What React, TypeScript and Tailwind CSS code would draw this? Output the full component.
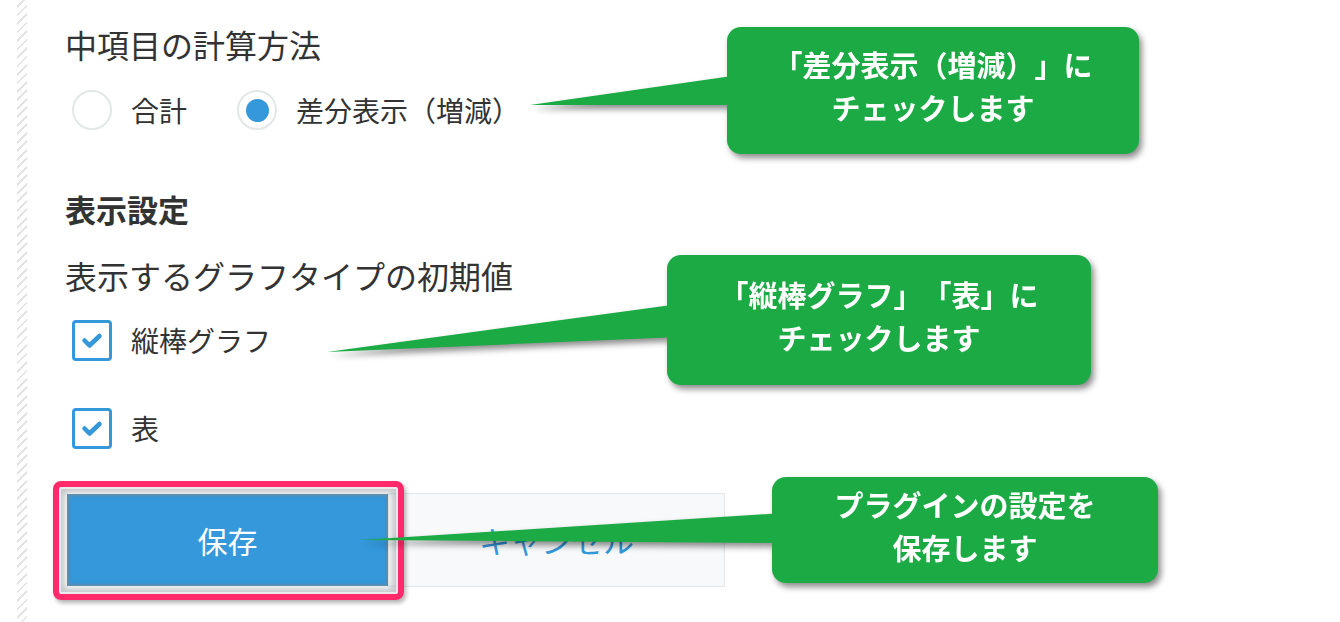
import { ReactNode } from "react";

const font = "font-['Noto_Sans_CJK_JP','Noto_Sans',sans-serif] [text-spacing-trim:space-all]";

function Callout({
  left,
  top,
  width,
  height,
  tip,
  base,
  children,
}: {
  left: number;
  top: number;
  width: number;
  height: number;
  tip: [number, number];
  base: [number, number];
  children: ReactNode;
}) {
  const w = -tip[0] + 12;
  return (
    <div
      className="absolute drop-shadow-[3px_4px_3px_rgba(0,0,0,0.45)]"
      style={{ left, top, width, height }}
    >
      <svg
        className="absolute top-0"
        style={{ left: tip[0], width: w, height }}
        viewBox={`0 0 ${w} ${height}`}
      >
        <polygon points={`0,${tip[1]} ${w},${base[0]} ${w},${base[1]}`} fill="#1baa44" />
      </svg>
      <div className="relative w-full h-full pb-[9px] rounded-[14px] bg-[#1baa44] flex flex-col items-center justify-center text-white font-bold text-[29px] leading-[43px]">
        {children}
      </div>
    </div>
  );
}

function Radio({ checked, label }: { checked?: boolean; label: string }) {
  return (
    <div className="flex items-center gap-[19px]">
      <div className="w-[40px] h-[40px] rounded-full border-2 border-[#e3e7e8] bg-white flex items-center justify-center">
        {checked && <div className="w-[23px] h-[23px] rounded-full bg-[#3498db]" />}
      </div>
      <span className="text-[28px] text-[#333]">{label}</span>
    </div>
  );
}

function Check({ label }: { label: string }) {
  return (
    <div className="flex items-center gap-[19px] ml-[7px] h-[44px]">
      <div className="w-[40px] h-[41px] rounded-[4px] border-[3px] border-[#3498db] bg-white flex items-center justify-center">
        <svg width="24" height="24" viewBox="0 0 24 24">
          <path d="M4.5 12.5l5 5L19.5 8" fill="none" stroke="#3498db" strokeWidth="4.5" strokeLinecap="round" strokeLinejoin="round" />
        </svg>
      </div>
      <span className="text-[28px] text-[#333]">{label}</span>
    </div>
  );
}

export default function App() {
  return (
    <div className={`relative w-[1340px] h-[622px] bg-white overflow-hidden flex ${font}`}>
      <div className="ml-[17px] w-[10px] h-full bg-[repeating-linear-gradient(135deg,#ffffff_0px,#ffffff_4px,#e4e4e4_4px,#e4e4e4_6px)]" />

      <div className="ml-[38px] flex flex-col text-[#333]">
        <h2 className="mt-[22px] text-[32px] leading-[44px] font-normal">中項目の計算方法</h2>
        <div className="mt-[22px] ml-[7px] h-[44px] flex items-center gap-[50px]">
          <Radio label="合計" />
          <Radio checked label="差分表示（増減）" />
        </div>

        <h3 className="mt-[55px] text-[31px] leading-[44px] font-bold">表示設定</h3>
        <div className="mt-[22px] text-[32px] leading-[44px]">表示するグラフタイプの初期値</div>

        <div className="mt-[21px]">
          <Check label="縦棒グラフ" />
        </div>
        <div className="mt-[44px]">
          <Check label="表" />
        </div>

        <div className="mt-[43px] ml-[2px] flex items-center">
          <div className="relative">
            <button className="w-[321px] h-[92px] bg-[#3498db] text-white text-[30px] shadow-[inset_0_0_2px_2px_rgba(120,130,135,0.5)]">
              保存
            </button>
            <div className="absolute -left-[14px] -top-[13px] -right-[16px] -bottom-[14px] rounded-[8px] border-[6px] border-[#fe2a6b] shadow-[inset_0_0_0_2px_#e8eaeb,inset_0_0_6px_6px_rgba(150,155,160,0.55),2px_3px_4px_rgba(0,0,0,0.3)]" />
          </div>
          <button className="w-[337px] h-[94px] bg-[#f7f9fa] border border-[#e3e7e8] text-[#3498db] text-[31px]">
            キャンセル
          </button>
        </div>
      </div>

      <Callout left={727} top={27} width={412} height={127} tip={[-197, 78]} base={[48, 78]}>
        <span>「差分表示（増減）」に</span>
        <span>チェックします</span>
      </Callout>
      <Callout left={667} top={255} width={424} height={130} tip={[-340, 97]} base={[49, 82]}>
        <span>「縦棒グラフ」「表」に</span>
        <span>チェックします</span>
      </Callout>
      <Callout left={772} top={477} width={386} height={106} tip={[-412, 63]} base={[36, 66]}>
        <span>プラグインの設定を</span>
        <span>保存します</span>
      </Callout>
    </div>
  );
}
